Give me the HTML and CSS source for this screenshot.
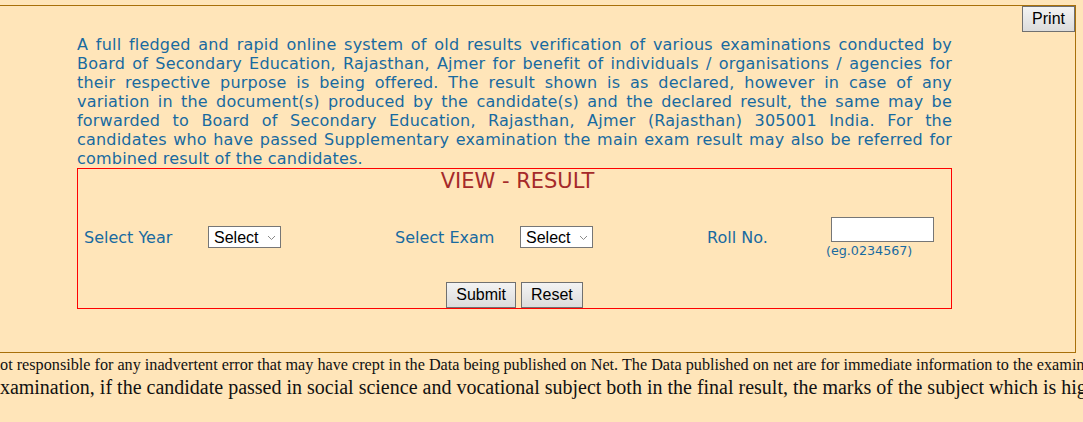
FILE: index.html
```html
<!DOCTYPE html>
<html lang="en">
<head>
<meta charset="utf-8">
<title>View Result</title>
<link rel="stylesheet" href="styles.css">
</head>
<body>
<div class="page">
  <div class="panel">
    <div class="toolbar">
      <button type="button" class="btn">Print</button>
    </div>
    <div class="content">
      <p class="intro">A full fledged and rapid online system of old results verification of various examinations conducted by Board of Secondary Education, Rajasthan, Ajmer for benefit of individuals / organisations / agencies for their respective purpose is being offered. The result shown is as declared, however in case of any variation in the document(s) produced by the candidate(s) and the declared result, the same may be forwarded to Board of Secondary Education, Rajasthan, Ajmer (Rajasthan) 305001 India. For the candidates who have passed Supplementary examination the main exam result may also be referred for combined result of the candidates.</p>
      <form class="result-box">
        <h2 class="title">VIEW - RESULT</h2>
        <div class="fields">
          <label class="field-label">Select Year</label>
          <span class="select-wrap">
            <select class="select"><option>Select</option></select>
            <svg class="chev" width="9" height="6" viewBox="0 0 9 6"><path d="M1 1 L4.5 4.5 L8 1" fill="none" stroke="#8a8a8a" stroke-width="1"/></svg>
          </span>
          <label class="field-label">Select Exam</label>
          <span class="select-wrap">
            <select class="select"><option>Select</option></select>
            <svg class="chev" width="9" height="6" viewBox="0 0 9 6"><path d="M1 1 L4.5 4.5 L8 1" fill="none" stroke="#8a8a8a" stroke-width="1"/></svg>
          </span>
          <label class="field-label">Roll No.</label>
          <div class="roll">
            <input type="text" class="roll-input">
            <span class="hint">(eg.0234567)</span>
          </div>
        </div>
        <div class="actions">
          <button type="button" class="btn">Submit</button>
          <button type="button" class="btn">Reset</button>
        </div>
      </form>
    </div>
  </div>
  <div class="notice notice-small">not responsible for any inadvertent error that may have crept in the Data being published on Net. The Data published on net are for immediate information to the examinees and do not constitute a legal document.</div>
  <div class="notice notice-large">examination, if the candidate passed in social science and vocational subject both in the final result, the marks of the subject which is higher will be counted.</div>
</div>
</body>
</html>
```

FILE: styles.css
```css
html, body {
  margin: 0;
  padding: 0;
  background: #ffe5b9;
  overflow: hidden;
}

.page {
  width: 1083px;
}

.panel {
  box-sizing: content-box;
  width: 1075px;
  margin-top: 5px;
  border-top: 1px solid #a8700a;
  border-right: 1px solid #a8700a;
  border-bottom: 1px solid #a8700a;
  padding-bottom: 43px;
}

.toolbar {
  display: flex;
  justify-content: flex-end;
  height: 26px;
}

.btn {
  box-sizing: border-box;
  height: 26px;
  padding: 0 9px;
  margin: 0;
  border: 1px solid #707070;
  border-radius: 0;
  background: linear-gradient(#f3f3f3, #dcdcdc);
  font-family: "Liberation Sans", Arial, sans-serif;
  font-size: 16px;
  color: #000;
}

.content {
  padding-left: 77px;
  margin-top: 3px;
}

.intro {
  width: 875px;
  margin: 0;
  font-family: "DejaVu Sans", Verdana, sans-serif;
  font-size: 16px;
  letter-spacing: 0.2px;
  line-height: 19px;
  color: #186aa0;
  text-align: justify;
}

.result-box {
  box-sizing: border-box;
  width: 875px;
  height: 141px;
  margin: 0;
  border: 1px solid #ff0000;
}

.title {
  margin: 0;
  height: 24px;
  padding-left: 6px;
  font-family: "DejaVu Sans", Verdana, sans-serif;
  font-weight: normal;
  font-size: 21px;
  line-height: 24px;
  text-align: center;
  color: #a52a2a;
}

.fields {
  display: grid;
  grid-template-columns: 124px 187px 125px 187px 119px 1fr;
  align-items: center;
  height: 46px;
  margin-top: 21px;
  padding-left: 6px;
}

.field-label {
  font-family: "DejaVu Sans", Verdana, sans-serif;
  font-size: 16px;
  color: #186aa0;
}

.select-wrap {
  position: relative;
  display: block;
  width: 73px;
  height: 22px;
}

.select {
  -webkit-appearance: none;
  appearance: none;
  box-sizing: border-box;
  width: 73px;
  height: 22px;
  margin: 0;
  padding: 0 0 0 5px;
  border: 1px solid #767676;
  border-radius: 0;
  background: #fff;
  font-family: "Liberation Sans", Arial, sans-serif;
  font-size: 16px;
  color: #000;
}

.chev {
  position: absolute;
  right: 5px;
  top: 9px;
  pointer-events: none;
}

.roll {
  display: flex;
  flex-direction: column;
}

.roll-input {
  box-sizing: border-box;
  width: 103px;
  height: 25px;
  margin: 0 0 0 5px;
  padding: 0 2px;
  border: 1px solid #767676;
  border-radius: 0;
  background: #fff;
}

.hint {
  display: block;
  margin-top: 1px;
  font-family: "DejaVu Sans", Verdana, sans-serif;
  font-size: 12.7px;
  line-height: 15px;
  color: #186aa0;
}

.actions {
  display: flex;
  justify-content: center;
  gap: 5px;
  margin-top: 22px;
}

.notice {
  white-space: nowrap;
  overflow: hidden;
  font-family: "Liberation Serif", "Times New Roman", serif;
  color: #111;
}

.notice-small {
  margin-top: 3px;
  font-size: 16.2px;
  line-height: 18px;
  text-indent: -8px;
}

.notice-large {
  margin-top: 2px;
  font-size: 20px;
  line-height: 23px;
  text-indent: -9px;
}
```
